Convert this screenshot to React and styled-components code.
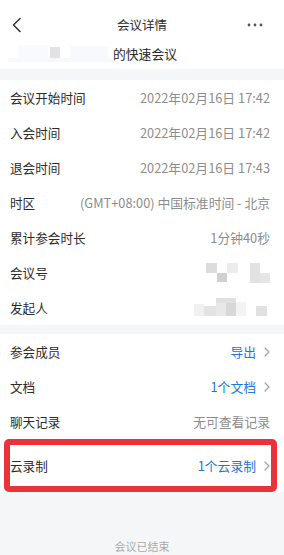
import React from "react";
import styled, { createGlobalStyle } from "styled-components";

const GlobalStyle = createGlobalStyle`
  html, body { margin: 0; padding: 0; background: #f5f6f8; }
  body { font-family: "Noto Sans CJK SC", "Noto Sans", sans-serif; }
  * { box-sizing: border-box; }
`;

const Page = styled.div`
  width: 284px;
  height: 555px;
  overflow: hidden;
  display: flex;
  flex-direction: column;
  background: #f5f6f8;
`;

const Header = styled.header`
  background: #fff;
  padding: 7px 0 6px;
  display: flex;
  flex-direction: column;
`;

const NavBar = styled.div`
  height: 36px;
  display: grid;
  grid-template-columns: 40px 1fr 40px;
  align-items: center;
`;

const NavButton = styled.div`
  display: flex;
  align-items: center;
  justify-content: ${(p) => (p.$end ? "flex-end" : "flex-start")};
  padding: ${(p) => (p.$end ? "0 21px 0 0" : "0 0 0 11px")};
`;

const Title = styled.div`
  text-align: center;
  font-size: 12.5px;
  color: #2e2e2e;
  line-height: 18px;
`;

const Subtitle = styled.div`
  height: 20px;
  display: flex;
  align-items: center;
  justify-content: flex-start;
  padding-left: 8px;
  font-size: 12.8px;
  color: #2a2a2a;
`;

const Mosaic = styled.svg`
  display: block;
  flex: none;
`;

const Band = styled.div`
  height: ${(p) => p.$h}px;
  flex: none;
`;

const Section = styled.section`
  background: #fff;
  display: flex;
  flex-direction: column;
`;

const Row = styled.div`
  position: relative;
  height: ${(p) => p.$h || 35}px;
  display: flex;
  align-items: center;
  justify-content: space-between;
  padding: 0 14px 0 10px;

  ${(p) =>
    p.$highlight &&
    `
    &::after {
      content: "";
      position: absolute;
      top: 0;
      bottom: 0;
      left: 4px;
      right: 7px;
      border: 6px solid #ea323a;
      border-radius: 5px;
      pointer-events: none;
    }
  `}
`;

const Label = styled.span`
  font-size: 12.6px;
  color: #2b2b2b;
  white-space: nowrap;
`;

const Value = styled.span`
  display: flex;
  align-items: center;
  gap: 8px;
  font-size: 12.8px;
  white-space: nowrap;
  color: ${(p) => (p.$link ? "#2475d8" : "#8d8d8d")};
`;

const Footer = styled.footer`
  flex: 1;
  padding-top: 46px;
  text-align: center;
  font-size: 11px;
  line-height: 16px;
  color: #ababab;
`;

const BackIcon = () => (
  <svg width="12" height="16" viewBox="0 0 12 16">
    <path d="M9 1.5 L2.5 8 L9 14.5" fill="none" stroke="#333" strokeWidth="1.5" strokeLinecap="round" strokeLinejoin="round" />
  </svg>
);

const MoreIcon = () => (
  <svg width="16" height="4" viewBox="0 0 16 4">
    <circle cx="2" cy="2" r="1.4" fill="#555" />
    <circle cx="8" cy="2" r="1.4" fill="#555" />
    <circle cx="14" cy="2" r="1.4" fill="#555" />
  </svg>
);

const Chevron = () => (
  <svg width="6" height="10" viewBox="0 0 6 10">
    <path d="M1 1 L5 5 L1 9" fill="none" stroke="#a2a2a2" strokeWidth="1.2" strokeLinecap="round" strokeLinejoin="round" />
  </svg>
);

const NameMosaic = () => (
  <Mosaic width="105" height="20" viewBox="0 0 105 20">
    <rect x="0" y="15" width="105" height="4" fill="#f6f8fb" />
    <rect x="10" y="2" width="30" height="14" fill="#f8fafd" />
    <rect x="42" y="4" width="10" height="11" fill="#e2e2e4" />
    <rect x="62" y="3" width="38" height="13" fill="#f7f9fc" />
  </Mosaic>
);

const NumberMosaic = () => (
  <Mosaic width="64" height="20" viewBox="0 0 64 20">
    <rect x="0" y="0" width="11" height="10" fill="#dcdcdc" />
    <rect x="11" y="10" width="10" height="9" fill="#d0d0d2" />
    <rect x="21" y="0" width="11" height="10" fill="#ececec" />
    <rect x="44" y="0" width="10" height="20" fill="#e2e2e2" />
    <rect x="54" y="10" width="10" height="10" fill="#e6e6e6" />
  </Mosaic>
);

const HostMosaic = () => (
  <Mosaic width="76" height="20" viewBox="0 0 76 20">
    <rect x="0" y="6" width="10" height="12" fill="#f1f1f1" />
    <rect x="10" y="8" width="12" height="10" fill="#e3e3e3" />
    <rect x="22" y="0" width="10" height="18" fill="#e8e8e8" />
    <rect x="22" y="0" width="20" height="5" fill="#e0e0e0" />
    <rect x="32" y="5" width="10" height="13" fill="#d8d8d8" />
    <rect x="42" y="4" width="10" height="14" fill="#f3f3f3" />
    <rect x="62" y="8" width="11" height="10" fill="#e1e1e1" />
  </Mosaic>
);

const details = [
  { label: "会议开始时间", value: "2022年02月16日 17:42" },
  { label: "入会时间", value: "2022年02月16日 17:42" },
  { label: "退会时间", value: "2022年02月16日 17:43" },
  { label: "时区", value: "(GMT+08:00) 中国标准时间 - 北京" },
  { label: "累计参会时长", value: "1分钟40秒" },
  { label: "会议号", mosaic: <NumberMosaic /> },
  { label: "发起人", mosaic: <HostMosaic /> },
];

const extras = [
  { label: "参会成员", value: "导出", link: true },
  { label: "文档", value: "1个文档", link: true },
  { label: "聊天记录", value: "无可查看记录" },
  { label: "云录制", value: "1个云录制", link: true, highlight: true, h: 53 },
];

export default function App() {
  return (
    <>
      <GlobalStyle />
      <Page>
        <Header>
          <NavBar>
            <NavButton>
              <BackIcon />
            </NavButton>
            <Title>会议详情</Title>
            <NavButton $end>
              <MoreIcon />
            </NavButton>
          </NavBar>
          <Subtitle>
            <NameMosaic />
            的快速会议
          </Subtitle>
        </Header>
        <Band $h={11} />
        <Section>
          {details.map((d) => (
            <Row key={d.label}>
              <Label>{d.label}</Label>
              {d.mosaic ? d.mosaic : <Value>{d.value}</Value>}
            </Row>
          ))}
        </Section>
        <Band $h={9} />
        <Section>
          {extras.map((d) => (
            <Row key={d.label} $h={d.h} $highlight={d.highlight}>
              <Label>{d.label}</Label>
              <Value $link={d.link}>
                {d.value}
                {d.link && <Chevron />}
              </Value>
            </Row>
          ))}
        </Section>
        <Footer>会议已结束</Footer>
      </Page>
    </>
  );
}
